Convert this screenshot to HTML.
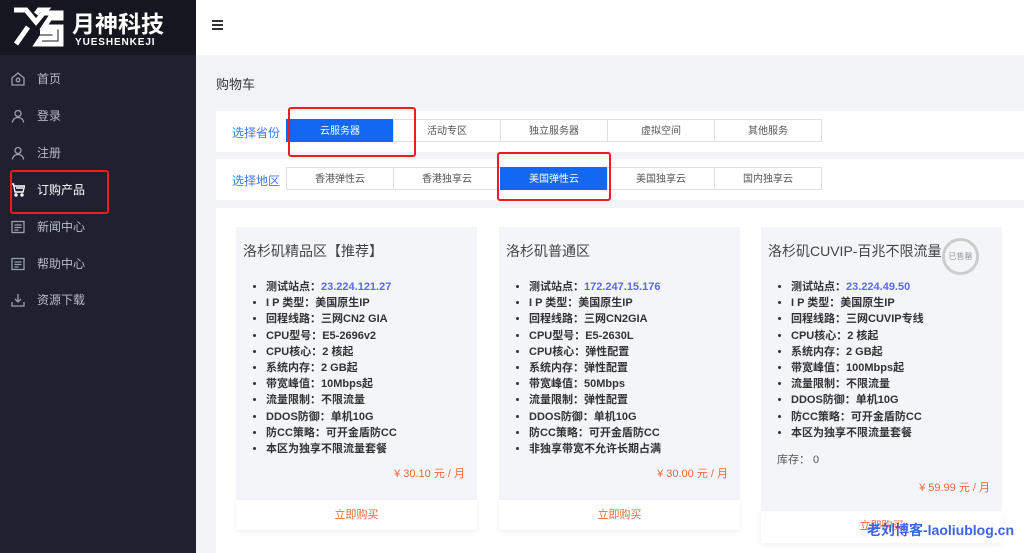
<!DOCTYPE html>
<html><head><meta charset="utf-8"><style>
*{margin:0;padding:0;box-sizing:border-box}
body{width:1024px;height:553px;overflow:hidden;background:#f2f3f6;font-family:"Liberation Sans","Noto Sans CJK SC",sans-serif;position:relative}
.side{position:absolute;left:0;top:0;width:196px;height:553px;background:#1f2030}
.logo{height:55px;background:#15161f;position:relative}
.nav{position:absolute;left:0;width:196px;height:37px;color:#b7bcc8;font-size:12px;line-height:37px;padding-left:37px}
.nav svg{position:absolute;left:11px;top:11px}
.top{position:absolute;left:196px;top:0;right:0;height:55px;background:#fff}
.title{position:absolute;left:216px;top:74px;font-size:13px;color:#333}
.row{position:absolute;left:216px;right:0;background:#fff;height:41px}
.lbl{position:absolute;left:16px;top:13px;font-size:12px;color:#3d7be8}
.btns{position:absolute;left:71px;top:8px;display:flex}
.b{width:108px;height:23px;border:1px solid #dcdfe6;margin-left:-1px;font-size:10px;color:#555;text-align:center;line-height:23px;background:#fff}
.b.on{background:#1268f2;color:#fff;border-color:#1268f2}
.red{position:absolute;border:2px solid #ee1c1c;border-radius:3px}
.panel{position:absolute;left:216px;top:208px;right:0;bottom:0;background:#fff}
.card{position:absolute;top:227px;width:241px;height:275px;background:#f4f5f8}
.card h3{font-weight:normal;font-size:14px;color:#444;margin:14px 0 0 7px}
.card ul{margin:18px 0 0 30px;font-size:11px;color:#333;font-weight:bold;line-height:16.2px}
.card li span{color:#5b6af0}
.price{position:absolute;right:12px;bottom:21px;color:#f2683c;font-size:11px}
.buy{position:absolute;height:30px;width:241px;background:#fff;color:#f2683c;font-size:11px;text-align:center;line-height:30px;top:500px;box-shadow:0 2px 6px rgba(0,0,0,.06)}
</style></head><body>
<div class="side">
<div class="logo">
<svg width="54" height="40" viewBox="0 0 54 40" style="position:absolute;left:11px;top:7px"><path d="M3 3h12l10 12L35 3h-7l-3 4" stroke="#fff" stroke-width="5" fill="none"/><path d="M5 37l12-17M34 6h16v5H39l-6 9h17v17H26l4-6h14v-6H29" stroke="#fff" stroke-width="5" fill="none"/></svg>
<div style="position:absolute;left:72px;top:5px;color:#fff;font-size:23px;font-weight:bold;letter-spacing:0px">月神科技</div>
<div style="position:absolute;left:75px;top:37px;color:#fff;font-size:10px;font-weight:bold;letter-spacing:.9px">YUESHENKEJI</div>
</div>
<div class="nav" style="top:61px"><svg width="14" height="14" viewBox="0 0 14 14" fill="none" stroke="#9aa0ad" stroke-width="1.3"><path d="M1 6L7 1l6 5v7H1z"/><circle cx="7" cy="8" r="1.8"/></svg>首页</div>
<div class="nav" style="top:98px"><svg width="14" height="14" viewBox="0 0 14 14" fill="none" stroke="#9aa0ad" stroke-width="1.3"><circle cx="7" cy="4.5" r="3"/><path d="M1.5 13.5c0-3 2.5-5 5.5-5s5.5 2 5.5 5"/></svg>登录</div>
<div class="nav" style="top:135px"><svg width="14" height="14" viewBox="0 0 14 14" fill="none" stroke="#9aa0ad" stroke-width="1.3"><circle cx="7" cy="4.5" r="3"/><path d="M1.5 13.5c0-3 2.5-5 5.5-5s5.5 2 5.5 5"/></svg>注册</div>
<div class="nav" style="top:172px;color:#fff"><svg width="14" height="14" viewBox="0 0 14 14" fill="none" stroke="#fff" stroke-width="1.4"><path d="M0 1h2.5l1.5 8h8l1.5-6H3M5 5h7"/><circle cx="5" cy="12" r="1"/><circle cx="11" cy="12" r="1"/></svg>订购产品</div>
<div class="nav" style="top:209px"><svg width="14" height="14" viewBox="0 0 14 14" fill="none" stroke="#9aa0ad" stroke-width="1.3"><rect x="1" y="1.5" width="12" height="11"/><path d="M3.5 5h7M3.5 7.5h7M3.5 10h4"/></svg>新闻中心</div>
<div class="nav" style="top:246px"><svg width="14" height="14" viewBox="0 0 14 14" fill="none" stroke="#9aa0ad" stroke-width="1.3"><rect x="1" y="1.5" width="12" height="11"/><path d="M3.5 5h7M3.5 7.5h7M3.5 10h4"/></svg>帮助中心</div>
<div class="nav" style="top:282px"><svg width="14" height="14" viewBox="0 0 14 14" fill="none" stroke="#9aa0ad" stroke-width="1.3"><path d="M1 9v4h12V9M7 1v8M4 6l3 3 3-3"/></svg>资源下载</div>
</div>
<div class="red" style="left:10px;top:170px;width:99px;height:44px"></div>
<div class="top"><div style="position:absolute;left:16px;top:20px;width:11px;height:2px;background:#333;box-shadow:0 4px #333,0 8px #333"></div></div>
<div class="title">购物车</div>
<div class="row" style="top:111px"><div class="lbl">选择省份</div><div class="btns"><div class="b on">云服务器</div><div class="b">活动专区</div><div class="b">独立服务器</div><div class="b">虚拟空间</div><div class="b">其他服务</div></div></div>
<div class="row" style="top:159px"><div class="lbl">选择地区</div><div class="btns"><div class="b">香港弹性云</div><div class="b">香港独享云</div><div class="b on">美国弹性云</div><div class="b">美国独享云</div><div class="b">国内独享云</div></div></div>
<div class="red" style="left:288px;top:107px;width:128px;height:50px"></div>
<div class="red" style="left:497px;top:152px;width:114px;height:49px"></div>
<div class="panel"></div>
<div class="card" style="left:236px"><h3>洛杉矶精品区【推荐】</h3><ul><li>测试站点：<span>23.224.121.27</span></li><li>I P 类型：美国原生IP</li><li>回程线路：三网CN2 GIA</li><li>CPU型号：E5-2696v2</li><li>CPU核心：2 核起</li><li>系统内存：2 GB起</li><li>带宽峰值：10Mbps起</li><li>流量限制：不限流量</li><li>DDOS防御：单机10G</li><li>防CC策略：可开金盾防CC</li><li>本区为独享不限流量套餐</li></ul><div class="price">¥ 30.10 元 / 月</div></div>
<div class="buy" style="left:236px">立即购买</div>
<div class="card" style="left:499px"><h3>洛杉矶普通区</h3><ul><li>测试站点：<span>172.247.15.176</span></li><li>I P 类型：美国原生IP</li><li>回程线路：三网CN2GIA</li><li>CPU型号：E5-2630L</li><li>CPU核心：弹性配置</li><li>系统内存：弹性配置</li><li>带宽峰值：50Mbps</li><li>流量限制：弹性配置</li><li>DDOS防御：单机10G</li><li>防CC策略：可开金盾防CC</li><li>非独享带宽不允许长期占满</li></ul><div class="price">¥ 30.00 元 / 月</div></div>
<div class="buy" style="left:499px">立即购买</div>
<div class="card" style="left:761px;height:290px"><h3>洛杉矶CUVIP-百兆不限流量</h3><ul><li>测试站点：<span>23.224.49.50</span></li><li>I P 类型：美国原生IP</li><li>回程线路：三网CUVIP专线</li><li>CPU核心：2 核起</li><li>系统内存：2 GB起</li><li>带宽峰值：100Mbps起</li><li>流量限制：不限流量</li><li>DDOS防御：单机10G</li><li>防CC策略：可开金盾防CC</li><li>本区为独享不限流量套餐</li></ul><div style="position:absolute;left:16px;top:224px;font-size:11px;color:#555">库存：  0</div><div class="price" style="bottom:22px">¥ 59.99 元 / 月</div>
<div style="position:absolute;left:181px;top:11px;width:37px;height:37px;border:3px solid #ccc;border-radius:50%;font-size:8px;color:#999;text-align:center;line-height:31px">已售罄</div></div>
<div class="buy" style="left:761px;top:511px;height:32px">立即购买</div>
<div style="position:absolute;left:867px;top:520px;font-size:14px;font-weight:bold;color:#3a63e8">老刘博客-laoliublog.cn</div>
</body></html>
